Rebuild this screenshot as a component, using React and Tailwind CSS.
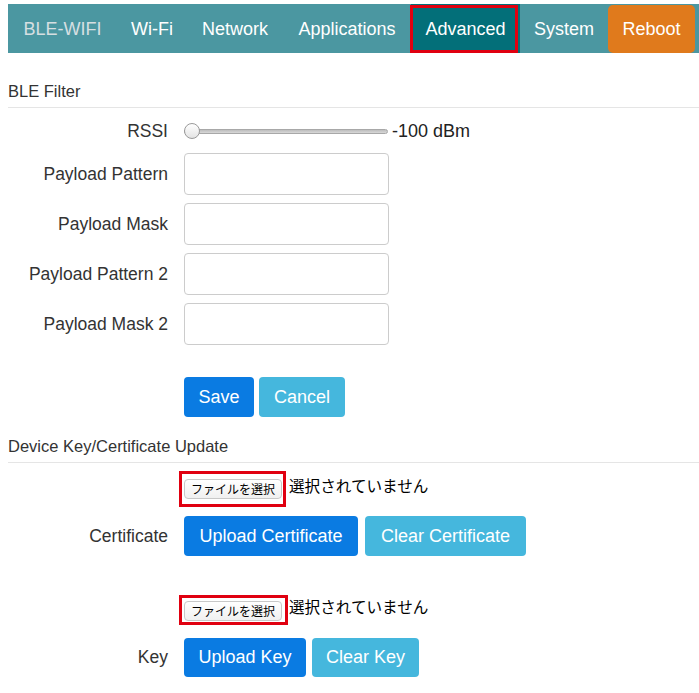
import React from 'react';

const navItems = [
  { label: 'Wi-Fi', w: 'w-[70px]' },
  { label: 'Network', w: 'w-[96px]' },
  { label: 'Applications', w: 'w-[128px]' },
];

function SectionHeader({ children, className = '' }) {
  return (
    <div className={`ml-[8px] border-b border-[#e5e5e5] pb-[5px] text-[16.5px] leading-[22px] text-[#333] ${className}`}>
      {children}
    </div>
  );
}

function FieldRow({ label, children, className = '' }) {
  return (
    <div className={`flex items-center ${className}`}>
      <label className="w-[168px] shrink-0 text-right text-[17.5px] text-[#333]">{label}</label>
      <div className="ml-[16px] flex items-center">{children}</div>
    </div>
  );
}

function TextInput() {
  return <input className="h-[42px] w-[205px] rounded-[4px] border border-[#ccc] bg-white px-3 outline-none" />;
}

function FileInput({ box, textOffset }) {
  return (
    <div className="flex items-start pl-[184px]">
      <div className="relative">
        <button className="flex h-[20px] w-[98px] items-center justify-center rounded-[4px] border border-[#c8c8c8] bg-gradient-to-b from-white to-[#f0f0f0] text-[12px] text-black [font-family:'Noto_Sans_CJK_JP',sans-serif]">
          ファイルを選択
        </button>
        <div className={`pointer-events-none absolute border-[3px] border-[#e00010] ${box}`} />
      </div>
      <span className={`relative ml-[7px] whitespace-nowrap text-[15.6px] leading-[20px] text-black [font-family:'Noto_Sans_CJK_JP',sans-serif] ${textOffset}`}>
        選択されていません
      </span>
    </div>
  );
}

export default function App() {
  return (
    <div className="min-h-[693px] bg-white pt-[4px] [font-family:'Liberation_Sans',Arial,sans-serif]">
      <nav className="ml-[8px] flex h-[49px] items-stretch whitespace-nowrap bg-[#4b97a1] text-[18px] text-white">
        <span className="flex w-[109px] shrink-0 items-center justify-center pt-[2px] text-[#d6dfe1]">BLE-WIFI</span>
        {navItems.map((item) => (
          <a key={item.label} className={`flex shrink-0 items-center justify-center pt-[2px] ${item.w}`}>{item.label}</a>
        ))}
        <a className="relative flex w-[109px] shrink-0 items-center justify-center bg-[#036f79] pt-[2px]">
          Advanced
          <span className="pointer-events-none absolute -left-[1px] right-[2px] top-[1px] bottom-0 border-[3px] border-[#e00010]" />
        </a>
        <a className="flex w-[88px] shrink-0 items-center justify-center pt-[2px]">System</a>
        <a className="mt-[1px] flex w-[87px] shrink-0 items-center justify-center rounded-[5px] bg-[#e07a1c] pt-[1px]">Reboot</a>
      </nav>

      <SectionHeader className="mt-[27px]">BLE Filter</SectionHeader>

      <FieldRow label="RSSI" className="mt-[12px] h-[22px]">
        <div className="relative flex h-[16px] w-[204px] items-center">
          <div className="h-[5px] w-full rounded-full border border-[#a8a8a8] bg-gradient-to-b from-[#bdbdbd] to-[#d8d8d8]" />
          <div className="absolute left-0 top-0 h-[16px] w-[16px] rounded-full border border-[#9a9a9a] bg-gradient-to-b from-white to-[#e4e4e4]" />
        </div>
        <span className="ml-[4px] text-[18px] text-[#222]">-100 dBm</span>
      </FieldRow>

      <div className="mt-[11px] flex flex-col gap-[8px]">
        <FieldRow label="Payload Pattern"><TextInput /></FieldRow>
        <FieldRow label="Payload Mask"><TextInput /></FieldRow>
        <FieldRow label="Payload Pattern 2"><TextInput /></FieldRow>
        <FieldRow label="Payload Mask 2"><TextInput /></FieldRow>
      </div>

      <div className="mt-[32px] flex gap-[5px] pl-[184px] text-[18px] text-white">
        <button className="h-[40px] w-[70px] rounded-[4px] bg-[#0a7be2]">Save</button>
        <button className="h-[40px] w-[86px] rounded-[4px] bg-[#45b7dd]">Cancel</button>
      </div>

      <SectionHeader className="mt-[18px]">Device Key/Certificate Update</SectionHeader>

      <div className="mt-[16px]">
        <FileInput box="-left-[5px] -right-[4px] -top-[8px] -bottom-[8px]" textOffset="-top-[4px]" />
      </div>

      <FieldRow label="Certificate" className="mt-[17px]">
        <div className="flex gap-[7px] text-[18px] text-white">
          <button className="h-[40px] w-[174px] rounded-[4px] bg-[#0a7be2]">Upload Certificate</button>
          <button className="h-[40px] w-[161px] rounded-[4px] bg-[#45b7dd]">Clear Certificate</button>
        </div>
      </FieldRow>

      <div className="mt-[45px]">
        <FileInput box="-left-[5px] -right-[6px] -top-[6px] -bottom-[4px]" textOffset="-top-[5px]" />
      </div>

      <FieldRow label="Key" className="mt-[17px]">
        <div className="flex gap-[6px] text-[18px] text-white">
          <button className="h-[39px] w-[122px] rounded-[4px] bg-[#0a7be2]">Upload Key</button>
          <button className="h-[39px] w-[107px] rounded-[4px] bg-[#45b7dd]">Clear Key</button>
        </div>
      </FieldRow>
    </div>
  );
}
